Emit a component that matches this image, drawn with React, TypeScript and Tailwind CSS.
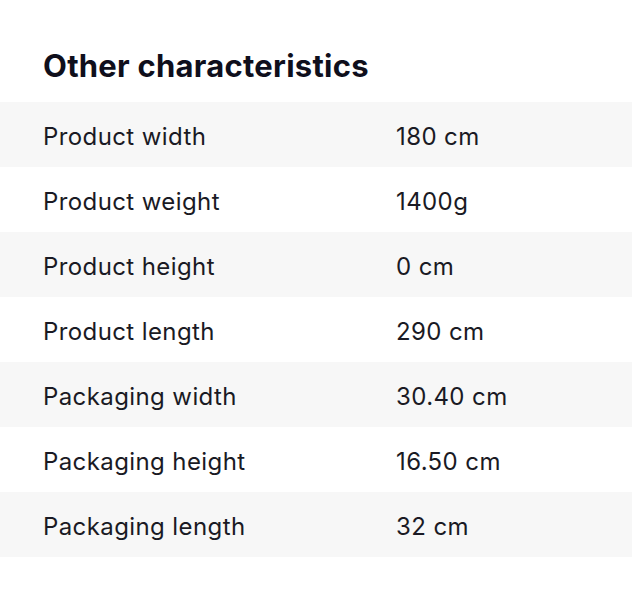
import React from "react";

const rows: [string, string][] = [
  ["Product width", "180 cm"],
  ["Product weight", "1400g"],
  ["Product height", "0 cm"],
  ["Product length", "290 cm"],
  ["Packaging width", "30.40 cm"],
  ["Packaging height", "16.50 cm"],
  ["Packaging length", "32 cm"],
];

export default function App() {
  return (
    <div className="w-[632px] h-[600px] bg-white text-[#1a1a24]" style={{ fontFamily: "Inter, 'Liberation Sans', sans-serif" }}>
      <div className="pt-[46px] pb-[16px] px-[43px]">
        <h2 className="text-[31px] leading-[40px] font-bold tracking-[0.25px] text-[#0f0f1c]">Other characteristics</h2>
      </div>
      <div className="flex flex-col">
        {rows.map(([k, v], i) => (
          <div key={k} className={`flex items-center h-[65px] pt-[4px] px-[43px] text-[24px] font-normal tracking-[0.4px] ${i % 2 === 0 ? "bg-[#f7f7f7]" : "bg-white"}`}>
            <div className="w-[353px]">{k}</div>
            <div>{v}</div>
          </div>
        ))}
      </div>
    </div>
  );
}
